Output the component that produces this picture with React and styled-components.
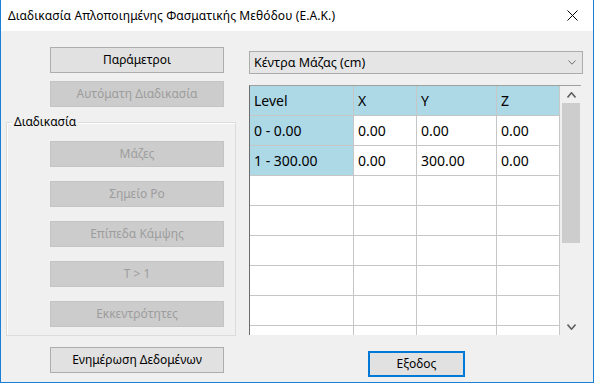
import React from "react";
import styled, { createGlobalStyle } from "styled-components";

const Global = createGlobalStyle`
  html, body { margin: 0; padding: 0; background: #f0f0f0; }
  body { font-family: "Noto Sans", "Open Sans", sans-serif; }
  * { box-sizing: border-box; }
`;

const Window = styled.div`
  width: 594px;
  height: 383px;
  display: flex;
  flex-direction: column;
  background: #f0f0f0;
  border: 1px solid #1c7fd6;
  border-top: none;
  overflow: hidden;
`;

const TitleBar = styled.div`
  height: 31px;
  flex: none;
  background: #ffffff;
  display: flex;
  align-items: center;
  justify-content: space-between;
  padding-left: 7px;
  font-size: 12px;
  color: #000;
`;

const TitleText = styled.span`
  line-height: 1;
  letter-spacing: 0.1px;
`;

const CloseBox = styled.div`
  width: 46px;
  height: 31px;
  display: flex;
  align-items: center;
  justify-content: center;
  margin-right: -2px;
`;

const Body = styled.div`
  flex: 1;
  display: flex;
`;

const LeftPane = styled.div`
  width: 240px;
  flex: none;
  display: flex;
  flex-direction: column;
  padding-top: 16px;
`;

const Button = styled.button`
  width: ${(p) => p.$w || 174}px;
  height: 26px;
  margin: ${(p) => p.$m || "0"};
  padding: 0;
  font-family: "Noto Sans", "Open Sans", sans-serif;
  font-size: 12px;
  color: ${(p) => (p.disabled ? "#9d9d9d" : "#000")};
  background: ${(p) => (p.disabled ? "#cccccc" : "#e1e1e1")};
  border: ${(p) =>
    p.$default ? "2px solid #0078d7" : p.disabled ? "1px solid #c4c4c4" : "1px solid #adadad"};
  display: flex;
  align-items: center;
  justify-content: center;
  line-height: 1;
  flex: none;
`;

const GroupBox = styled.div`
  position: relative;
  margin: 15px 0 0 5px;
  width: 230px;
  border: 1px solid #dcdcdc;
  box-shadow: inset 1px 1px 0 #ffffff;
  padding: 18px 0 8px 43px;
  display: flex;
  flex-direction: column;
  gap: 14px;
`;

const Legend = styled.span`
  position: absolute;
  top: -8px;
  left: 5px;
  padding: 0 2px;
  background: #f0f0f0;
  font-size: 12px;
  line-height: 14px;
  color: #000;
`;

const RightPane = styled.div`
  flex: 1;
  display: flex;
  flex-direction: column;
  padding: 20px 0 0 8px;
`;

const Combo = styled.div`
  width: 334px;
  height: 23px;
  background: #e5e5e5;
  border: 1px solid #acacac;
  display: flex;
  align-items: center;
  justify-content: space-between;
  padding: 0 6px 0 4px;
  font-size: 12.5px;
  color: #000;
`;

const GridFrame = styled.div`
  margin-top: 11px;
  width: 332px;
  height: 250px;
  display: flex;
  border-top: 1px solid #a0a0a0;
  border-left: 1px solid #6d6d6d;
  background: #f0f0f0;
  overflow: hidden;
`;

const Table = styled.div`
  width: 310px;
  flex: none;
  display: grid;
  grid-template-columns: 104px 63px 80px 63px;
  grid-auto-rows: 30px;
  align-content: start;
  background: #ffffff;
  overflow: hidden;
`;

const Cell = styled.div`
  border-right: 1px solid #c6c6c6;
  border-bottom: 1px solid #c6c6c6;
  background: ${(p) => (p.$hl ? "#add8e6" : "#ffffff")};
  display: flex;
  align-items: center;
  padding-left: 4px;
  font-size: 14px;
  color: #000;
  line-height: 1;
`;

const ScrollBar = styled.div`
  width: 21px;
  flex: none;
  display: flex;
  flex-direction: column;
  background: #f0f0f0;
`;

const ScrollArrow = styled.div`
  height: 17px;
  flex: none;
  display: flex;
  align-items: center;
  justify-content: center;
  padding-left: 1px;
`;

const Thumb = styled.div`
  height: 140px;
  margin: 0 0 0 2px;
  width: 18px;
  background: #cdcdcd;
`;

const Track = styled.div`
  flex: 1;
`;

const ExitRow = styled.div`
  width: 332px;
  display: flex;
  justify-content: center;
  margin-top: 16px;
  padding-left: 3px;
`;

const Chevron = ({ up, w = 8, h = 5, sw = 1, color = "#606060" }) => (
  <svg width={w} height={h} viewBox={`0 0 ${w} ${h}`}>
    <polyline
      points={up ? `0.5,${h - 0.5} ${w / 2},0.8 ${w - 0.5},${h - 0.5}` : `0.5,0.5 ${w / 2},${h - 0.8} ${w - 0.5},0.5`}
      fill="none"
      stroke={color}
      strokeWidth={sw}
    />
  </svg>
);

const rows = [
  ["Level", "X", "Y", "Z"],
  ["0 - 0.00", "0.00", "0.00", "0.00"],
  ["1 - 300.00", "0.00", "300.00", "0.00"],
  ["", "", "", ""],
  ["", "", "", ""],
  ["", "", "", ""],
  ["", "", "", ""],
  ["", "", "", ""],
  ["", "", "", ""],
];

export default function App() {
  return (
    <>
      <Global />
      <Window>
        <TitleBar>
          <TitleText>Διαδικασία Απλοποιημένης Φασματικής Μεθόδου (Ε.Α.Κ.)</TitleText>
          <CloseBox>
            <svg width="11" height="11" viewBox="0 0 11 11">
              <path d="M0.5 0.5 L10.5 10.5 M10.5 0.5 L0.5 10.5" stroke="#000" strokeWidth="1" />
            </svg>
          </CloseBox>
        </TitleBar>
        <Body>
          <LeftPane>
            <Button $m="0 0 0 49px">Παράμετροι</Button>
            <Button $m="8px 0 0 49px" disabled>
              Αυτόματη Διαδικασία
            </Button>
            <GroupBox>
              <Legend>Διαδικασία</Legend>
              <Button disabled>Μάζες</Button>
              <Button disabled>Σημείο Po</Button>
              <Button disabled>Επίπεδα Κάμψης</Button>
              <Button disabled>T &gt; 1</Button>
              <Button disabled>Εκκεντρότητες</Button>
            </GroupBox>
            <Button $m="11px 0 0 49px">Ενημέρωση Δεδομένων</Button>
          </LeftPane>
          <RightPane>
            <Combo>
              <span>Κέντρα Μάζας (cm)</span>
              <Chevron w={8} h={5} color="#707070" />
            </Combo>
            <GridFrame>
              <Table>
                {rows.map((r, i) =>
                  r.map((c, j) => (
                    <Cell key={`${i}-${j}`} $hl={i === 0 || (j === 0 && i <= 2)}>
                      {c}
                    </Cell>
                  ))
                )}
              </Table>
              <ScrollBar>
                <ScrollArrow>
                  <Chevron up w={9} h={6} sw={1.6} />
                </ScrollArrow>
                <Thumb />
                <Track />
                <ScrollArrow>
                  <Chevron w={9} h={6} sw={1.6} />
                </ScrollArrow>
              </ScrollBar>
            </GridFrame>
            <ExitRow>
              <Button $w={97} $default>
                Εξοδος
              </Button>
            </ExitRow>
          </RightPane>
        </Body>
      </Window>
    </>
  );
}
